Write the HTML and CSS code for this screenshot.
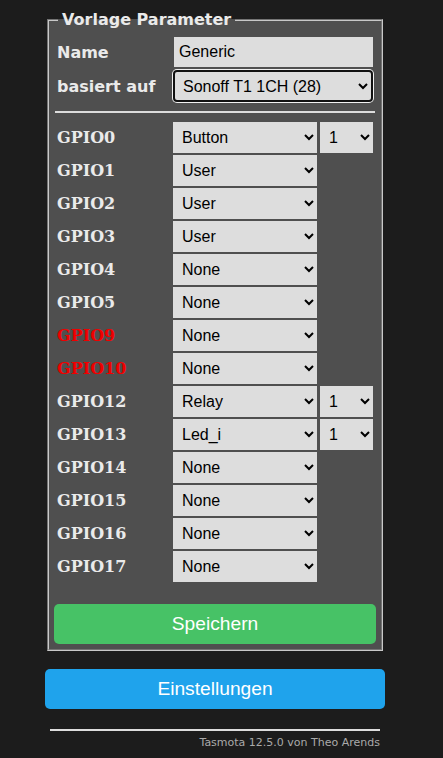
FILE: index.html
```html
<!DOCTYPE html>
<html lang="de">
<head>
<meta charset="utf-8">
<title>Tasmota - Vorlage</title>
<link rel="stylesheet" href="styles.css">
</head>
<body>
<div class="main">
<fieldset class="box">
  <legend>Vorlage Parameter</legend>
  <div class="row"><span class="lbl">Name</span><input class="name" type="text" value="Generic"></div>
  <div class="row"><span class="lbl">basiert auf</span><select class="base focus"><option>Sonoff T1 1CH (28)</option></select></div>
  <hr class="sep">
  <div class="gpio">
    <span class="g">GPIO0</span><select><option>Button</option></select><select class="idx"><option>1</option></select>
    <span class="g">GPIO1</span><select><option>User</option></select><span></span>
    <span class="g">GPIO2</span><select><option>User</option></select><span></span>
    <span class="g">GPIO3</span><select><option>User</option></select><span></span>
    <span class="g">GPIO4</span><select><option>None</option></select><span></span>
    <span class="g">GPIO5</span><select><option>None</option></select><span></span>
    <span class="g red">GPIO9</span><select><option>None</option></select><span></span>
    <span class="g red">GPIO10</span><select><option>None</option></select><span></span>
    <span class="g">GPIO12</span><select><option>Relay</option></select><select class="idx"><option>1</option></select>
    <span class="g">GPIO13</span><select><option>Led_i</option></select><select class="idx"><option>1</option></select>
    <span class="g">GPIO14</span><select><option>None</option></select><span></span>
    <span class="g">GPIO15</span><select><option>None</option></select><span></span>
    <span class="g">GPIO16</span><select><option>None</option></select><span></span>
    <span class="g">GPIO17</span><select><option>None</option></select><span></span>
  </div>
  <button class="btn save">Speichern</button>
</fieldset>
<button class="btn cfg">Einstellungen</button>
<hr class="foothr">
<div class="foot">Tasmota 12.5.0 von Theo Arends</div>
</div>
</body>
</html>
```
FILE: styles.css
```css
*{box-sizing:border-box;}
body{background:#1c1c1c;color:#eaeaea;margin:0;font-family:"DejaVu Sans",Verdana,sans-serif;font-size:16px;}
.main{width:340px;margin:10px 0 0 45px;}
.box{background:#4f4f4f;margin:0 2px;border:2px groove #c8c8c8;padding:8px 5px 5px 5px;}
.box legend{font-weight:bold;padding:0 4px;margin-left:4px;color:#eaeaea;line-height:19px;}
.row{display:flex;align-items:center;margin:0 0 3px 0;}
.lbl{width:119px;padding-left:3px;font-weight:bold;}
input,select{font-family:"Liberation Sans",Arial,sans-serif;font-size:16px;color:#000;background:#dddddd;border:0;padding:5px;border-radius:0;}
.name{width:199px;height:30px;margin-left:1px;}
.base{width:200px;height:32px;}
.focus{border:2px solid #111;border-radius:4px;box-shadow:0 0 0 1px #f0f0f0;padding:3px 4px;}
.sep{border:0;border-top:2px solid #dcdcdc;margin:9px 1px 9px 1px;}
.gpio{display:grid;grid-template-columns:116px 144px 53px;column-gap:3px;row-gap:2px;align-items:center;}
.gpio select{height:31px;width:100%;}
.g{padding-left:3px;font-family:"DejaVu Serif",Georgia,serif;font-weight:bold;}
.red{color:#f00000;}
.btn{display:block;width:100%;border:0;border-radius:5px;color:#fff;font-family:"Liberation Sans",Arial,sans-serif;font-size:19.2px;height:40px;}
.save{background:#47c266;margin:22px 0 0 0;}
.cfg{background:#1fa3ec;margin-top:18px;}
.foothr{border:0;border-top:2px solid #dddddd;margin:20px 5px 0 5px;}
.foot{text-align:right;font-size:11px;color:#aaaaaa;padding:5px 5px 0 0;}
```
